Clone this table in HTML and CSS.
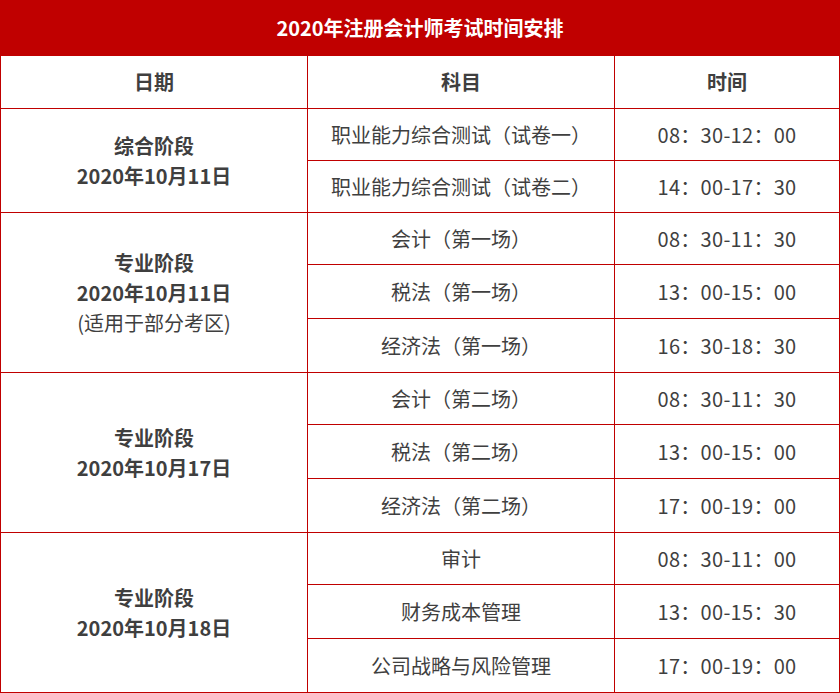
FILE: index.html
```html
<!DOCTYPE html>
<html lang="zh-CN">
<head>
<meta charset="utf-8">
<title>2020年注册会计师考试时间安排</title>
<link rel="stylesheet" href="styles.css">
</head>
<body>
<table class="schedule">
  <colgroup>
    <col class="c-date">
    <col class="c-subject">
    <col class="c-time">
  </colgroup>
  <thead>
    <tr class="title-row"><th colspan="3">2020年注册会计师考试时间安排</th></tr>
    <tr class="head-row"><th>日期</th><th>科目</th><th>时间</th></tr>
  </thead>
  <tbody>
    <tr class="r52">
      <td rowspan="2" class="date"><b>综合阶段</b><br><b>2020年10月11日</b></td>
      <td>职业能力综合测试（试卷一）</td><td class="time">08：30-12：00</td>
    </tr>
    <tr class="r52"><td>职业能力综合测试（试卷二）</td><td class="time">14：00-17：30</td></tr>

    <tr class="r52">
      <td rowspan="3" class="date"><b>专业阶段</b><br><b>2020年10月11日</b><br><span class="note">(适用于部分考区)</span></td>
      <td>会计（第一场）</td><td class="time">08：30-11：30</td>
    </tr>
    <tr class="r54"><td>税法（第一场）</td><td class="time">13：00-15：00</td></tr>
    <tr class="r54"><td>经济法（第一场）</td><td class="time">16：30-18：30</td></tr>

    <tr class="r52">
      <td rowspan="3" class="date"><b>专业阶段</b><br><b>2020年10月17日</b></td>
      <td>会计（第二场）</td><td class="time">08：30-11：30</td>
    </tr>
    <tr class="r54"><td>税法（第二场）</td><td class="time">13：00-15：00</td></tr>
    <tr class="r54"><td>经济法（第二场）</td><td class="time">17：00-19：00</td></tr>

    <tr class="r52">
      <td rowspan="3" class="date"><b>专业阶段</b><br><b>2020年10月18日</b></td>
      <td>审计</td><td class="time">08：30-11：00</td>
    </tr>
    <tr class="r54"><td>财务成本管理</td><td class="time">13：00-15：30</td></tr>
    <tr class="r54"><td>公司战略与风险管理</td><td class="time">17：00-19：00</td></tr>
  </tbody>
</table>
</body>
</html>
```
FILE: styles.css
```css
html, body {
  margin: 0;
  padding: 0;
  background: #ffffff;
}

.schedule {
  border-collapse: collapse;
  table-layout: fixed;
  width: 839px;
  font-family: "Noto Sans CJK SC", "Noto Sans", sans-serif;
  font-size: 20px;
  line-height: 30px;
  color: #3f3f3f;
}

.c-date { width: 307px; }
.c-subject { width: 307px; }
.c-time { width: 225px; }

.schedule th,
.schedule td {
  border: 1px solid #c00000;
  text-align: center;
  vertical-align: middle;
  padding: 0;
}

.title-row { height: 55px; }
.title-row th {
  background: #c00000;
  color: #ffffff;
  font-weight: bold;
  font-size: 20px;
}

.head-row { height: 53px; }
.head-row th { font-weight: bold; }

.r52 { height: 52px; }
.r54 { height: 54px; }

.date b { font-weight: bold; }
.note { font-weight: normal; }

.time { letter-spacing: 0.3px; }
```
